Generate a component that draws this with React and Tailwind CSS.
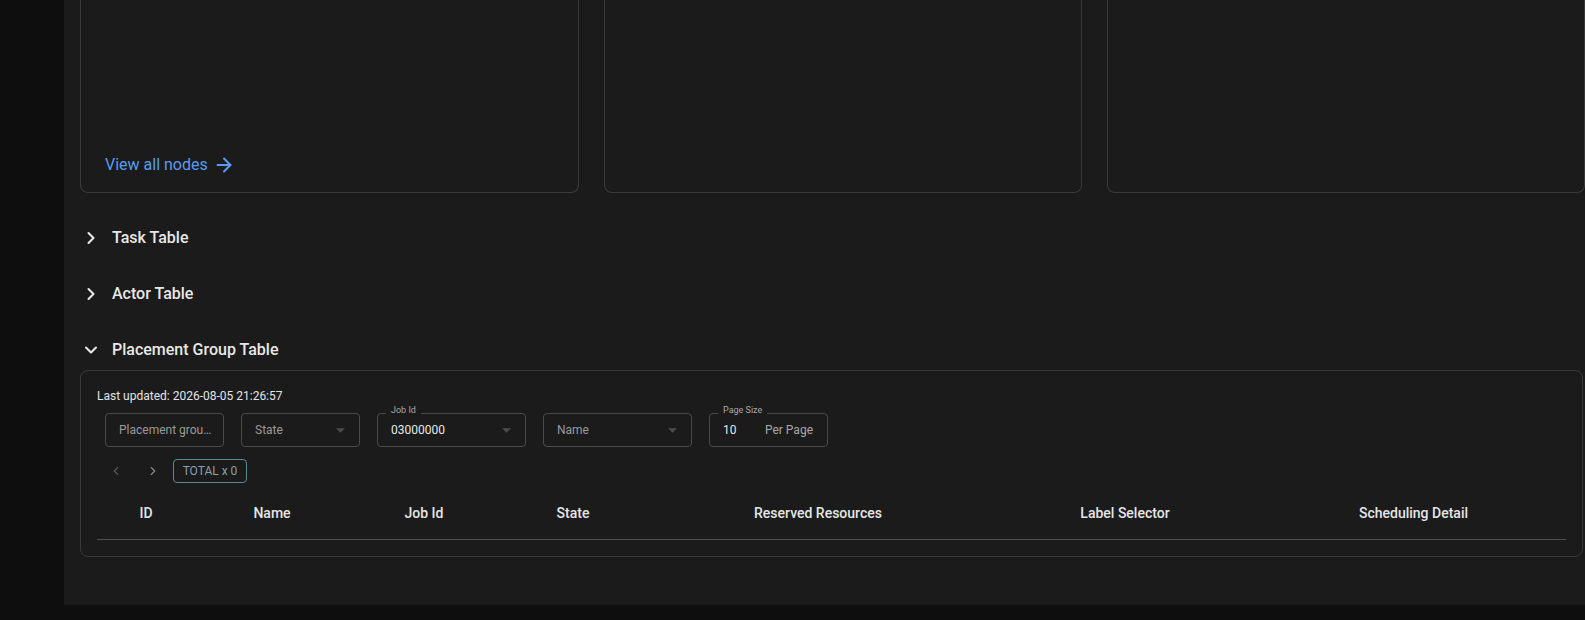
import React from "react";
import { ChevronRight, ChevronDown, ChevronLeft, ArrowRight } from "lucide-react";

const font = { fontFamily: "Roboto, 'Noto Sans', sans-serif" };

function Caret() {
  return (
    <svg width="9" height="5" viewBox="0 0 10 5" className="shrink-0">
      <path d="M0 0 L10 0 L5 5 Z" fill="#4c4c4c" />
    </svg>
  );
}

function Outlined({ width, label, children, pr = "pr-[15px]" }) {
  return (
    <div className={`relative h-[34px] shrink-0 ${width}`}>
      <div className="absolute inset-0 rounded-[4px] border border-[#4a4a4a]" />
      {label && (
        <div className="absolute left-[9px] top-[-9px] h-[12px] px-[5px] bg-[#1b1b1b] text-[9px] leading-[12px] text-[#a8a8a8]">
          {label}
        </div>
      )}
      <div className={`relative flex h-full items-center pl-[14px] ${pr} text-[12px]`}>{children}</div>
    </div>
  );
}

function Section({ title, open, h = "h-[56px]", extra = "" }) {
  return (
    <div className={`flex items-center gap-[11px] pl-[1px] ${h} ${extra}`}>
      {open ? (
        <ChevronDown size={20} strokeWidth={2.5} color="#e8e8e8" />
      ) : (
        <ChevronRight size={20} strokeWidth={2.5} color="#e8e8e8" />
      )}
      <span className="text-[16px] font-medium text-[#e8e8e8]">{title}</span>
    </div>
  );
}

const cols = [
  ["ID", "w-[98px]"],
  ["Name", "w-[154px]"],
  ["Job Id", "w-[150px]"],
  ["State", "w-[148px]"],
  ["Reserved Resources", "w-[342px]"],
  ["Label Selector", "w-[272px]"],
  ["Scheduling Detail", "w-[305px]"],
];

export default function App() {
  return (
    <div className="flex h-[620px] w-[1585px] overflow-hidden bg-[#0e0e0e]" style={font}>
      <div className="w-[64px] shrink-0 bg-[#0e0e0e]" />
      <div className="flex h-[605px] flex-1 flex-col overflow-hidden bg-[#1b1b1b] pl-4">
        <div className="grid h-[193px] shrink-0 grid-cols-[499px_478px_478px] gap-[25px]">
          <div className="flex flex-col justify-end rounded-b-[8px] border-x border-b border-[#3a3a3a] pb-[16px] pl-6">
            <div className="flex h-[22px] items-center gap-[5px] text-[16px] leading-[20px] text-[#5a9bf0]">
              <span>View all nodes</span>
              <ArrowRight size={22} strokeWidth={2.2} color="#5a9bf0" />
            </div>
          </div>
          <div className="rounded-b-[8px] border-x border-b border-[#3a3a3a]" />
          <div className="rounded-b-[8px] border-x border-b border-[#3a3a3a]" />
        </div>

        <div className="mt-[17px]">
          <Section title="Task Table" />
          <Section title="Actor Table" />
          <Section title="Placement Group Table" open h="h-[48px]" extra="pt-[8px]" />
        </div>

        <div className="mr-[2px] rounded-[8px] border border-[#3a3a3a] px-4 pb-4 pt-[15px]">
          <div className="text-[12px] leading-[20px] text-[#e4e4e4]">Last updated: 2026-08-05 21:26:57</div>
          <div className="ml-2 mt-[7px] flex gap-[17px]">
            <Outlined width="w-[119px]" pr="pr-[8px]">
              <span className="truncate text-[#9a9a9a]">Placement group…</span>
            </Outlined>
            <Outlined width="w-[119px]">
              <span className="flex-1 text-[#9a9a9a]">State</span>
              <Caret />
            </Outlined>
            <Outlined width="w-[149px]" label="Job Id">
              <span className="flex-1 text-[#e8e8e8]">03000000</span>
              <Caret />
            </Outlined>
            <Outlined width="w-[149px]">
              <span className="flex-1 text-[#9a9a9a]">Name</span>
              <Caret />
            </Outlined>
            <Outlined width="w-[119px]" label="Page Size">
              <span className="flex-1 text-[#e8e8e8]">10</span>
              <span className="text-[#a8a8a8]">Per Page</span>
            </Outlined>
          </div>
          <div className="ml-[3px] mt-[12px] flex h-[24px] items-center">
            <div className="flex h-[24px] w-[32px] items-center justify-center">
              <ChevronLeft size={14} strokeWidth={2} color="#5a5a5a" />
            </div>
            <div className="ml-[5px] flex h-[24px] w-[32px] items-center justify-center">
              <ChevronRight size={14} strokeWidth={2} color="#8a8a8a" />
            </div>
            <div className="ml-[4px] flex h-[24px] w-[74px] items-center justify-center rounded-[4px] border border-[#5b8894] text-[12px] text-[#8aa0a8]">
              TOTAL x 0
            </div>
          </div>
          <div className="mt-[4px] flex h-[53px] items-center border-b border-[#4e4e4e]">
            {cols.map(([t, w]) => (
              <div key={t} className={`${w} shrink-0 text-center text-[14px] font-medium text-[#e6e6e6]`}>
                {t}
              </div>
            ))}
          </div>
        </div>
      </div>
    </div>
  );
}
